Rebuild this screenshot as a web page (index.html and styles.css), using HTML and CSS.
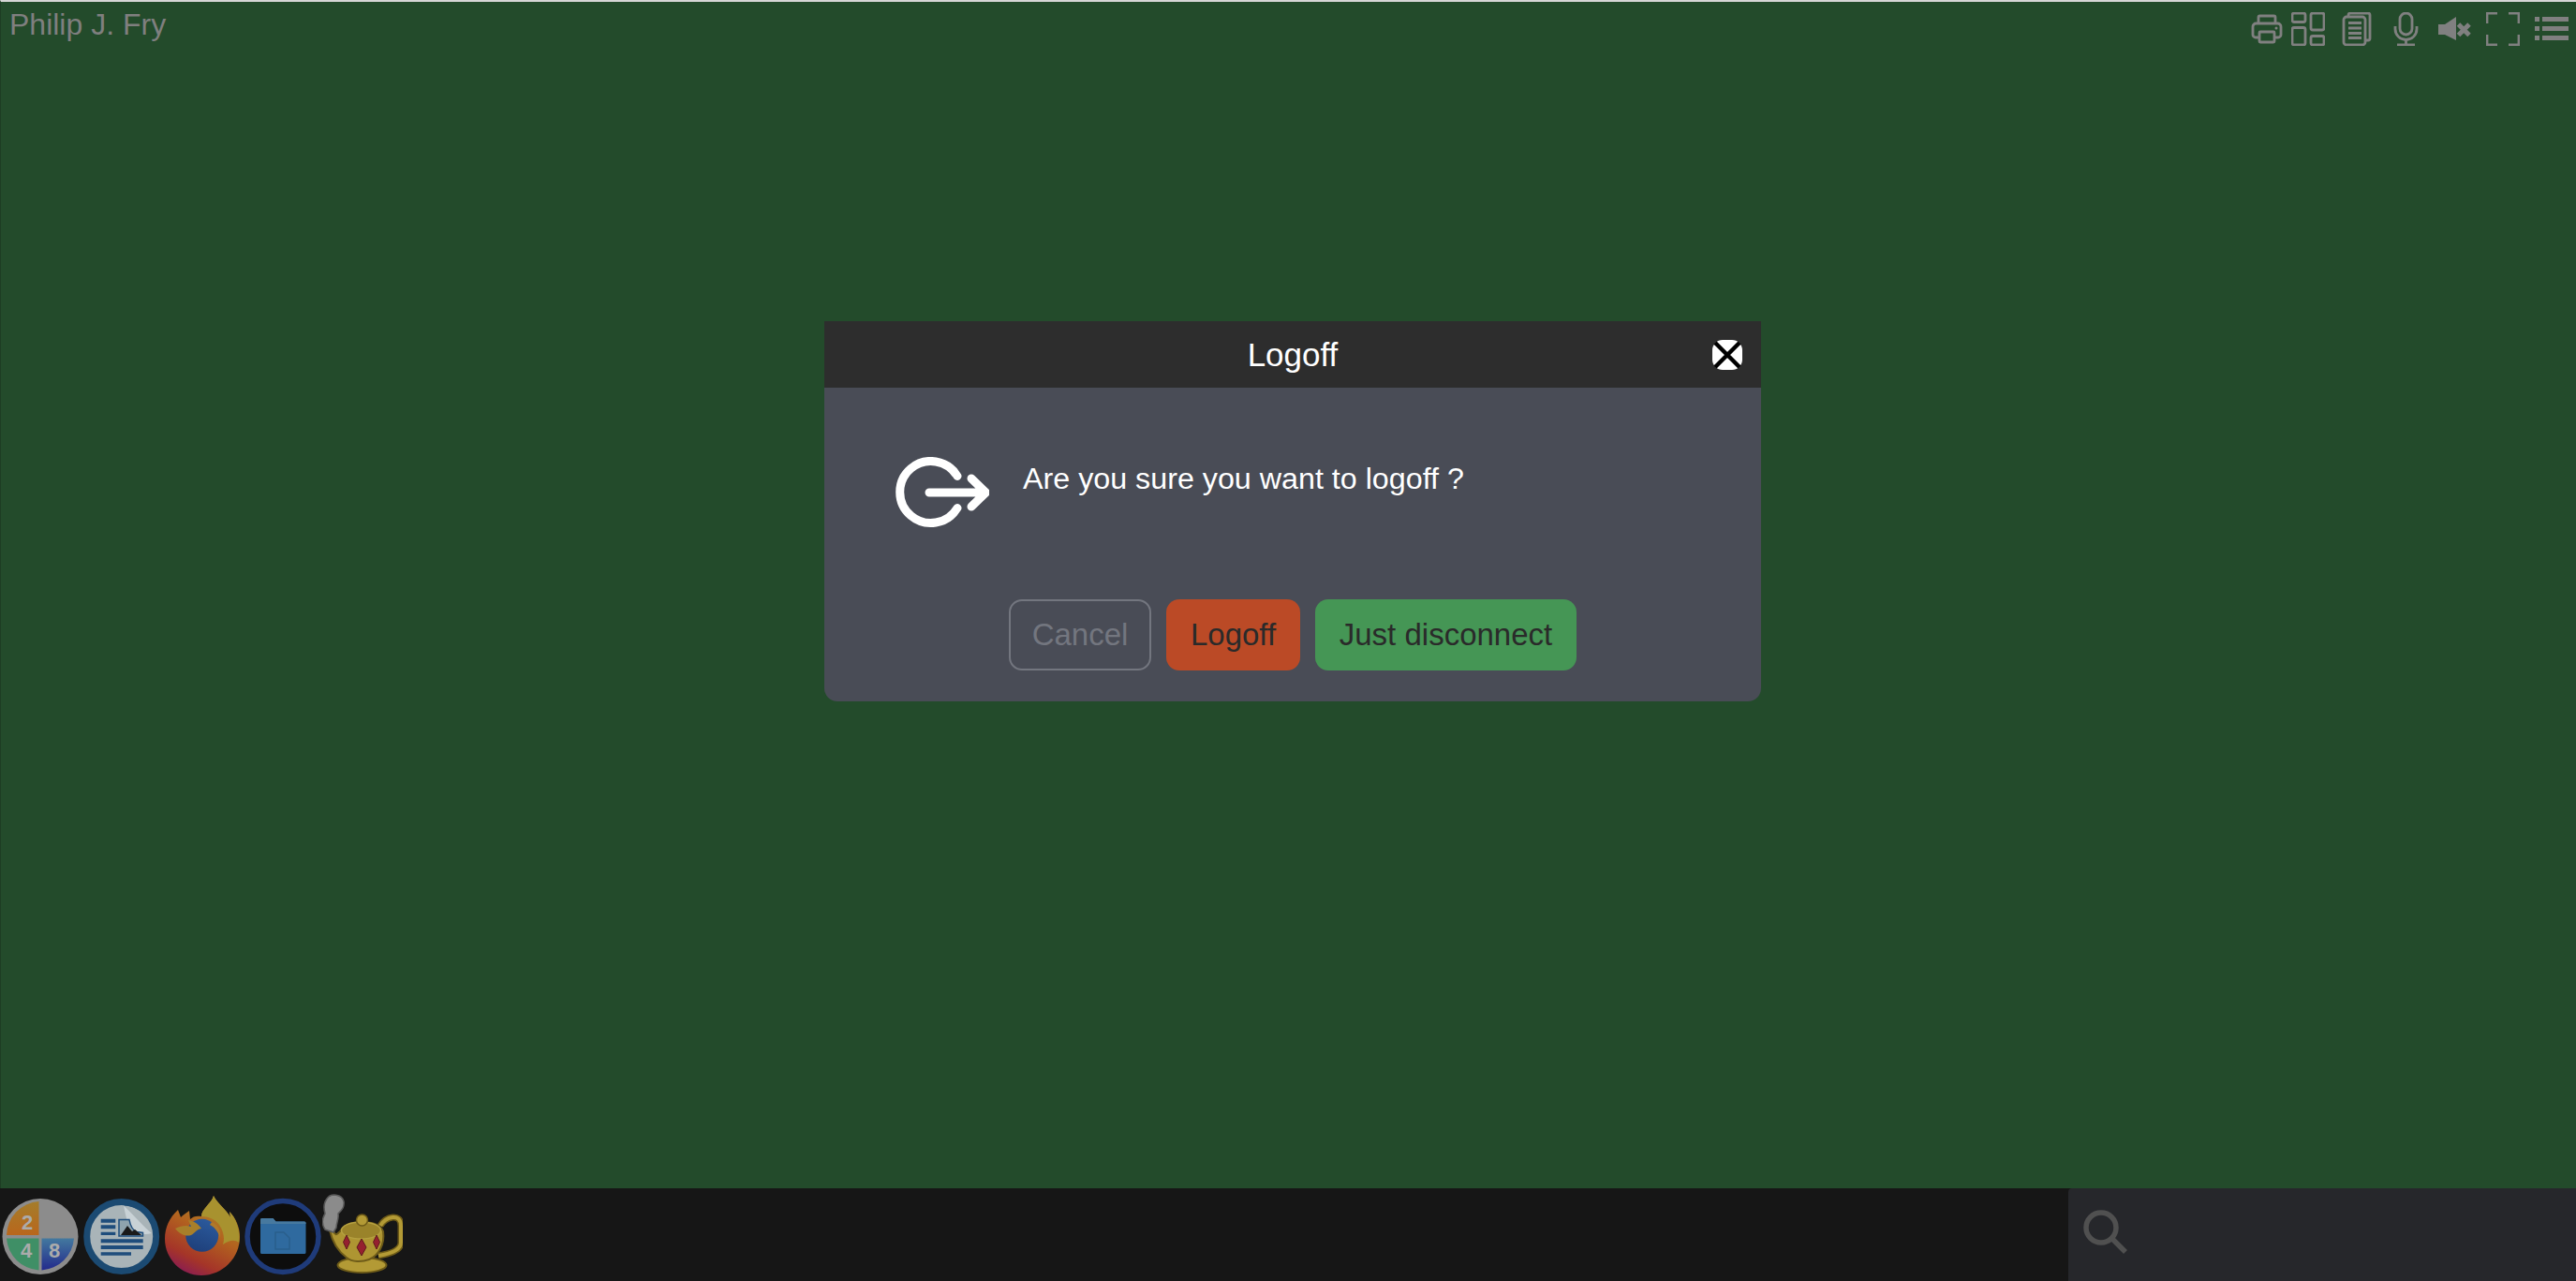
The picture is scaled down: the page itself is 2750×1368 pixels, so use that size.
FILE: index.html
```html
<!DOCTYPE html>
<html lang="en">

<head>
    <meta charset="UTF-8">
    <meta name="viewport" content="width=device-width, initial-scale=1.0">
    <title>Logoff</title>
    <link rel="stylesheet" href="styles.css">
</head>

<body>
    <div class="desktop">
        <div class="topbar">
            <div class="username">Philip J. Fry</div>
            <div class="tools">
                <!-- print -->
                <svg class="tool tool-print" viewBox="0 0 36 36">
                    <path d="M9 12V5.5a1.5 1.5 0 0 1 1.5-1.5h15a1.500 1.500 0 0 1 1.500 1.500V12" />
                    <path d="M10 27H6a3 3 0 0 1-3-3v-8.500a3.500 3.500 0 0 1 3.500-3.500h23a3.500 3.500 0 0 1 3.500 3.500V24a3 3 0 0 1-3 3h-4" />
                    <rect x="10" y="21" width="16" height="11" rx="1" />
                    <circle class="solid" cx="28" cy="17" r="1.500" />
                </svg>
                <!-- layouts -->
                <svg class="tool" viewBox="0 0 36 36">
                    <rect x="1" y="1" width="14" height="9.500" rx="2" />
                    <rect x="21" y="1" width="14" height="18" rx="2" />
                    <rect x="1" y="16.500" width="14" height="18.500" rx="2" />
                    <rect x="21" y="25.500" width="14" height="9.500" rx="2" />
                </svg>
                <!-- documents -->
                <svg class="tool" viewBox="0 0 36 36">
                    <path d="M9 4V3a2 2 0 0 1 2-2h19a2 2 0 0 1 2 2v25a2 2 0 0 1-2 2h-3" />
                    <rect x="4" y="5" width="23" height="30" rx="3" />
                    <path d="M9 11.500h14M9 17h14M9 22.500h14M9 27.500h14" />
                </svg>
                <!-- microphone -->
                <svg class="tool" viewBox="0 0 36 36">
                    <rect x="12" y="1" width="13" height="23" rx="6.500" />
                    <path d="M7 15v3a11.500 11.500 0 0 0 23 0v-3M18.500 29.500V35M9 35h19" />
                </svg>
                <!-- sound off -->
                <svg class="tool" viewBox="0 0 36 36">
                    <path class="solid" d="M1 13h7L20 5v25L8 24H1z" />
                    <path class="thick" d="M22.500 13l11.500 11.500M34 13L22.500 24.500" />
                </svg>
                <!-- fullscreen -->
                <svg class="tool" viewBox="0 0 36 36">
                    <path d="M12 1H1v11M24 1h11v11M1 24v11h11M35 24v11H24" />
                </svg>
                <!-- menu -->
                <svg class="tool" viewBox="0 0 36 36">
                    <path class="solid" d="M0 5h5v5H0zM8 5h28v5H8zM0 15h5v5H0zM8 15h28v5H8zM0 25h5v5H0zM8 25h28v5H8z" />
                </svg>
            </div>
        </div>

        <div class="overlay">
            <div class="dialog">
                <div class="dialog-title">
                    <span>Logoff</span>
                    <svg class="dialog-close" viewBox="0 0 32 32">
                        <rect class="close-bg" width="32" height="32" rx="11" />
                        <path class="close-x" d="M3 3l26 26M29 3L3 29" />
                    </svg>
                </div>
                <div class="dialog-body">
                    <div class="message">
                        <svg class="logoff-icon" viewBox="0 0 100 78">
                            <path d="M66 20.500a33 33 0 1 0 0 34" />
                            <path d="M36 38h60M81 23l15.500 15L81 53" />
                        </svg>
                        <p class="message-text">Are you sure you want to logoff ?</p>
                    </div>
                    <div class="actions">
                        <button class="btn btn-cancel">Cancel</button>
                        <button class="btn btn-logoff">Logoff</button>
                        <button class="btn btn-disconnect">Just disconnect</button>
                    </div>
                </div>
            </div>
        </div>
    </div>

    <div class="dock">
        <div class="apps">
            <!-- 2048 -->
            <svg class="app" viewBox="0 0 86 99">
                <defs>
                    <linearGradient id="tile-blue" x1="0" y1="0" x2="0" y2="1">
                        <stop offset="0" stop-color="#43799f" />
                        <stop offset="1" stop-color="#232a8c" />
                    </linearGradient>
                    <linearGradient id="tile-orange" x1="0" y1="0" x2="0" y2="1">
                        <stop offset="0" stop-color="#a47d2b" />
                        <stop offset="1" stop-color="#b9661c" />
                    </linearGradient>
                    <linearGradient id="fox" x1="0.800" y1="0" x2="0.300" y2="1">
                        <stop offset="0" stop-color="#a8922f" />
                        <stop offset="0.450" stop-color="#b2631f" />
                        <stop offset="0.800" stop-color="#a53528" />
                        <stop offset="1" stop-color="#8a1c52" />
                    </linearGradient>
                    <linearGradient id="fox-globe" x1="0.700" y1="0" x2="0.300" y2="1">
                        <stop offset="0" stop-color="#2b5a9c" />
                        <stop offset="1" stop-color="#1e3f7a" />
                    </linearGradient>
                </defs>
                <circle cx="43" cy="51.500" r="40.500" fill="#8c8c8c" />
                <path d="M41.500 14A37 37 0 0 0 7 50h34.500z" fill="url(#tile-orange)" />
                <path d="M41.500 53.500H7A37 37 0 0 0 41.500 87.500z" fill="#3f8f66" />
                <path d="M44.500 53.500V87.500A37 37 0 0 0 79 53.500z" fill="url(#tile-blue)" />
                <text class="tile-num" x="23" y="44">2</text>
                <text class="tile-num" x="22" y="74">4</text>
                <text class="tile-num" x="52" y="74">8</text>
            </svg>
            <!-- document viewer -->
            <svg class="app" viewBox="0 0 86 99">
                <circle cx="43.700" cy="51.500" r="37" fill="#a9b4b8" stroke="#1b4a72" stroke-width="7" />
                <path d="M46 18.500C62 19 78 32 79 48 82 40 76 22 62 17 56 15 50 16 46 18.500z" fill="#1b4a72" />
                <path d="M46 18.500c2 10 4 22 11 27 6 4 13 4 19 2.500C68 42 58 30 46 18.500z" fill="#c9d2d6" />
                <path d="M21.700 32.700h15.600v4H21.700zM21.700 39.300h15.600v4H21.700zM21.700 46.700h15.600V50H21.700zM21.700 54.300h45v4h-45zM21.700 61h45v4h-45zM21.700 68.300H54v3.400H21.700z" fill="#1f4d7c" />
                <path d="M41 33.500h11c1 6 3 11 8 13l6.500 1V51H41z" fill="#8fa3ad" stroke="#1f4d7c" stroke-width="1.500" />
                <path d="M43 50l7-10 5 6 3-2 7 6z" fill="#1a1a1a" />
            </svg>
            <!-- firefox -->
            <svg class="app" viewBox="0 0 86 99">
                <path d="M56 8C54 16 43 22 43 30 38 29 34 30 31 33L30 24C27 26 23 29 21 31L18 23C9 31 4 42 4 54 4 75 21 93 43 93 66 93 84 74 84 52 84 42 80 32 73 25L74 31C69 22 60 16 56 8z" fill="url(#fox)" />
                <path d="M56 8C54 16 43 22 43 30 50 30 58 33 62 39 67 46 68 54 66 60 72 56 78 54 83 58 85 46 80 32 73 25L74 31C69 22 60 16 56 8z" fill="#a8922f" />
                <circle cx="43.700" cy="50.300" r="17.500" fill="url(#fox-globe)" />
                <path d="M15 43c6-3 12-4 17-2l-3-7c6 1 11 4 14 9-6 1-7 5-11 7-6 2-12-1-17-7z" fill="#a87f2a" />
                <path d="M54 36c7 3 10 9 9 17-2-6-5-11-11-14z" fill="#b0792a" />
            </svg>
            <!-- files -->
            <svg class="app" viewBox="0 0 86 99">
                <circle cx="44" cy="51.500" r="38" fill="#0d0d0d" stroke="#1f3b7a" stroke-width="5.500" />
                <path d="M20 33.500a1.500 1.500 0 0 1 1.500-1.500h12l3 3.500h30.500a1.500 1.500 0 0 1 1.500 1.500v31.500a1.500 1.500 0 0 1-1.500 1.500H21.500a1.500 1.500 0 0 1-1.500-1.500z" fill="#2f6a9f" />
                <path d="M20 38v-4.500a1.500 1.500 0 0 1 1.500-1.500h12l3 3.500h30.500a1.500 1.500 0 0 1 1.500 1.500v1z" fill="#47799f" />
                <path d="M36 47h9l6 6v12H36z" fill="none" stroke="#2a5f8c" stroke-width="1.500" />
            </svg>
            <!-- genie lamp -->
            <svg class="app" viewBox="0 0 86 99">
                <path class="lamp-handle-edge" d="M62 40C68 30 84 26 84 40V58C84 66 72 70 60 72" />
                <path class="lamp-handle" d="M62 40C68 30 84 26 84 40V58C84 66 72 70 60 72" />
                <ellipse cx="42.500" cy="82" rx="26" ry="8" fill="#b39a35" stroke="#6e5b18" stroke-width="2" />
                <path d="M8 45L12 46C15 52 16 48 19 46 24 38 34 36 42 36 52 36 62 38 65 46 67 60 60 72 50 76 42 79 32 79 26 74 18 68 11 58 8 45z" fill="#ae9532" stroke="#6e5b18" stroke-width="2" />
                <ellipse cx="41.500" cy="45" rx="21" ry="9" fill="#9a832a" stroke="#b5a040" stroke-width="1.500" />
                <circle cx="42.500" cy="34" r="6" fill="#b39a35" stroke="#6e5b18" stroke-width="1.500" />
                <path d="M26 50l3.500 7.500L26 65l-3.500-7.500zM42 54l5 9-5 9-5-9zM58 50l3.500 7.500L58 65l-3.500-7.500z" fill="#95202f" stroke="#5e1a1c" stroke-width="1" />
                <path d="M5 11C9 5 21 6 23 14 24 21 20 24 17 27 18 33 15 37 15 42L12 47 3 44C-1 38 0 32 3 27 1 20 2 15 5 11z" fill="#8b8b8b" stroke="#5a5a5a" stroke-width="1.500" />
            </svg>
        </div>
        <div class="search">
            <svg class="search-icon" viewBox="0 0 48 48">
                <circle cx="19" cy="19" r="16" />
                <path d="M31 31l14 14" />
            </svg>
        </div>
    </div>
</body>

</html>
```

FILE: styles.css
```css
* {
    box-sizing: border-box;
}

html,
body {
    height: 100%;
}

body {
    margin: 0;
    display: flex;
    flex-direction: column;
    font-family: "Liberation Sans", Arial, sans-serif;
    background-color: #234b2b;
    overflow: hidden;
}

.desktop {
    position: relative;
    flex: 1;
    border-top: 2px solid #d6d6d6;
    border-left: 1px solid #1d3d23;
}

.topbar {
    display: flex;
    justify-content: space-between;
    align-items: flex-start;
}

.username {
    margin: 6px 0 0 9px;
    font-size: 32px;
    line-height: 36px;
    color: #7f7f7f;
}

.tools {
    display: flex;
    gap: 16px;
    padding: 11px 8px 0 0;
}

.tool {
    width: 36px;
    height: 36px;
    fill: none;
    stroke: #808080;
    stroke-width: 2.8;
}

.tool-print {
    margin-right: -8px;
}

.tool .solid {
    fill: #808080;
    stroke: none;
}

.tool .thick {
    stroke-width: 5;
}

.overlay {
    position: absolute;
    inset: 0;
    display: flex;
    justify-content: center;
    padding: 341px 0 0 9px;
}

.dialog {
    width: 1000px;
    height: 406px;
    display: flex;
    flex-direction: column;
    background-color: #494c56;
    border-radius: 0 0 14px 14px;
}

.dialog-title {
    height: 71px;
    flex: none;
    display: flex;
    align-items: center;
    justify-content: center;
    position: relative;
    background-color: #2d2d2d;
    font-size: 35px;
    color: #fff;
}

.dialog-close {
    position: absolute;
    top: 20px;
    right: 20px;
    width: 32px;
    height: 32px;
}

.close-bg {
    fill: #fff;
}

.close-x {
    fill: none;
    stroke: #000;
    stroke-width: 4.5;
}

.dialog-body {
    flex: 1;
    display: flex;
    flex-direction: column;
    justify-content: space-between;
    padding: 74px 0 33px 76px;
}

.message {
    display: flex;
    gap: 36px;
}

.logoff-icon {
    width: 100px;
    height: 78px;
    fill: none;
    stroke: #fff;
    stroke-width: 9;
    stroke-linecap: round;
    stroke-linejoin: round;
}

.message-text {
    margin: 4px 0 0;
    font-size: 32.25px;
    line-height: 38px;
    color: #fff;
}

.actions {
    display: flex;
    gap: 16px;
    margin-left: 121px;
}

.btn {
    height: 76px;
    padding: 0;
    border: none;
    border-radius: 14px;
    font-family: inherit;
    font-size: 33px;
    color: #2a2a2a;
}

.btn-cancel {
    width: 152px;
    background: none;
    border: 2px solid #73767f;
    color: #73767f;
}

.btn-logoff {
    width: 143px;
    background-color: #bb4a26;
}

.btn-disconnect {
    width: 279px;
    background-color: #459655;
}

.dock {
    height: 99px;
    flex: none;
    display: flex;
    justify-content: space-between;
    background-color: #161616;
}

.apps {
    display: flex;
}

.app {
    width: 86px;
    height: 99px;
}

.tile-num {
    font-family: "Liberation Sans", Arial, sans-serif;
    font-size: 22px;
    font-weight: bold;
    fill: #ababab;
}

.lamp-handle-edge {
    fill: none;
    stroke: #6e5b18;
    stroke-width: 7;
}

.lamp-handle {
    fill: none;
    stroke: #b39a35;
    stroke-width: 4;
}

.search {
    width: 542px;
    padding: 23px 0 0 16px;
    background-color: #26272b;
    border-radius: 4px 0 0 0;
}

.search-icon {
    width: 48px;
    height: 48px;
    fill: none;
    stroke: #505050;
    stroke-width: 5.5;
}
```
